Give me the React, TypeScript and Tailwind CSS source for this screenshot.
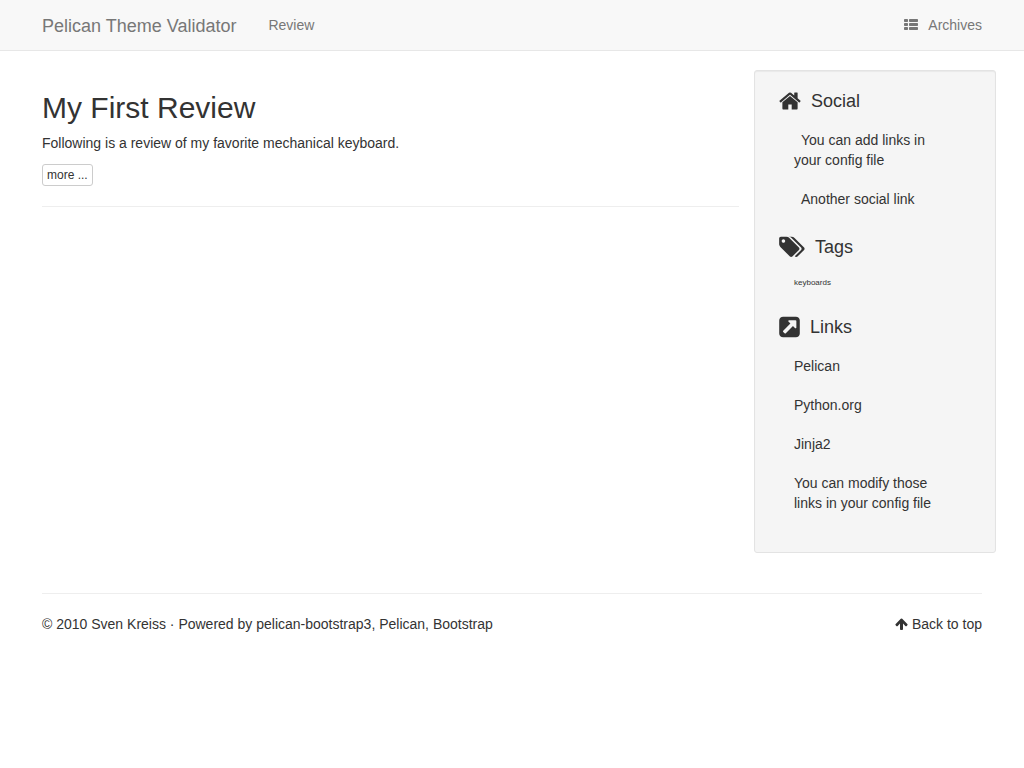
import type { ReactNode } from "react";

type IconProps = { className?: string };

function ListIcon({ className }: IconProps) {
  return (
    <svg viewBox="0 0 1792 1792" className={className} fill="currentColor" aria-hidden="true">
      {[128, 640, 1152].map((y) => (
        <g key={y}>
          <rect x="0" y={y} width="512" height="384" rx="96" />
          <rect x="640" y={y} width="1152" height="384" rx="96" />
        </g>
      ))}
    </svg>
  );
}

function HomeIcon({ className }: IconProps) {
  return (
    <svg viewBox="64 0 1664 1792" className={className} fill="currentColor" aria-hidden="true">
      <path d="M1472 992v480q0 26-19 45t-45 19h-384v-384h-256v384h-384q-26 0-45-19t-19-45v-480q0-1 .5-3t.5-3l575-474 575 474q1 2 1 6zm223-69l-62 74q-8 9-21 11h-3q-13 0-21-7l-692-577-692 577q-12 8-24 7-13-2-21-11l-62-74q-8-10-7-23.5t11-21.5l719-599q32-26 76-26t76 26l244 204v-195q0-14 9-23t23-9h192q14 0 23 9t9 23v408l219 182q10 8 11 21.5t-7 23.5z" />
    </svg>
  );
}

function TagsIcon({ className }: IconProps) {
  return (
    <svg viewBox="0 0 1920 1792" className={className} fill="currentColor" aria-hidden="true">
      <path d="M448 448q0-53-37.500-90.500t-90.500-37.500-90.500 37.500-37.500 90.500 37.500 90.500 90.500 37.500 90.500-37.500 37.500-90.500zm1067 576q0 53-37 90l-491 492q-39 37-91 37-53 0-90-37l-715-716q-38-37-64.500-101t-26.500-117v-416q0-52 38-90t90-38h416q53 0 117 26.500t102 64.500l715 714q37 39 37 91zm384 0q0 53-37 90l-491 492q-39 37-91 37-36 0-59-14t-53-45l470-470q37-37 37-90 0-52-37-91l-715-714q-38-38-102-64.500t-117-26.500h224q53 0 117 26.500t102 64.500l715 714q37 39 37 91z" />
    </svg>
  );
}

function LinkSquareIcon({ className }: IconProps) {
  return (
    <svg viewBox="0 0 1536 1792" className={className} fill="currentColor" aria-hidden="true">
      <path d="M1280 928v-480q0-26-19-45t-45-19h-480q-42 0-59 39-17 41 14 70l144 144-534 534q-19 19-19 45t19 45l102 102q19 19 45 19t45-19l534-534 144 144q18 19 45 19 12 0 25-5 39-17 39-59zm256-512v960q0 119-84.500 203.500t-203.500 84.500h-960q-119 0-203.500-84.500t-84.500-203.500v-960q0-119 84.500-203.500t203.500-84.500h960q119 0 203.500 84.500t84.500 203.500z" />
    </svg>
  );
}

function ArrowUpIcon({ className }: IconProps) {
  return (
    <svg viewBox="64 0 1664 1792" className={className} fill="currentColor" aria-hidden="true">
      <path d="M1675 971q0 51-37 90l-75 75q-38 38-91 38-54 0-90-38l-294-293v704q0 52-37.500 84.500t-90.500 32.500h-128q-53 0-90.500-32.500t-37.500-84.500v-704l-294 293q-36 38-90 38t-90-38l-75-75q-38-38-38-90 0-53 38-91l651-651q35-37 90-37 54 0 91 37l651 651q37 39 37 91z" />
    </svg>
  );
}

function SideSection({ icon, title, children }: { icon: ReactNode; title: string; children: ReactNode }) {
  return (
    <section className="mb-7">
      <h4 className="flex h-5 items-center gap-2.5 text-lg leading-5">
        {icon}
        {title}
      </h4>
      <ul className="mt-[19px] flex flex-col gap-[19px] px-[15px]">{children}</ul>
    </section>
  );
}

const links = ["Pelican", "Python.org", "Jinja2", "You can modify those links in your config file"];

export default function App() {
  return (
    <div className="bg-white font-['Liberation_Sans',Arial,sans-serif] text-sm leading-5 text-[#333333]">
      <nav className="border-b border-[#e7e7e7] bg-[#f8f8f8] text-[#777777]">
        <div className="mx-auto flex h-[50px] max-w-[970px] items-center px-[15px]">
          <a href="#" className="pt-0.5 text-lg leading-5">Pelican Theme Validator</a>
          <a href="#review" className="ml-8">Review</a>
          <a href="#archives" className="ml-auto flex items-center gap-2.5">
            <ListIcon className="h-3.5 w-3.5" />
            Archives
          </a>
        </div>
      </nav>

      <div className="mx-auto mt-[19px] flex max-w-[970px] items-start">
        <main className="min-w-0 flex-1 px-[15px] pt-[21px]">
          <article>
            <h2 className="text-3xl leading-[33px]">
              <a href="#first">My First Review</a>
            </h2>
            <p className="mt-[9px]">Following is a review of my favorite mechanical keyboard.</p>
            <a
              href="#more"
              className="mt-[11px] inline-block rounded-[3px] border border-[#cccccc] bg-white px-1 py-px text-xs leading-[18px]"
            >
              more ...
            </a>
            <hr className="mt-5 border-[#eeeeee]" />
          </article>
        </main>

        <aside className="mr-px w-[242px] shrink-0 rounded-[3px] border border-[#e3e3e3] bg-[#f5f5f5] px-6 pt-5 pb-[11px] shadow-[inset_0_1px_1px_rgba(0,0,0,0.05)]">
          <SideSection icon={<HomeIcon className="h-6 w-[22px]" />} title="Social">
            <li>
              <a href="#social" className="block pr-2">
                <span className="inline-block w-[7px]" />
                You can add links in your config file
              </a>
            </li>
            <li>
              <a href="#another" className="block">
                <span className="inline-block w-[7px]" />
                Another social link
              </a>
            </li>
          </SideSection>
          <SideSection icon={<TagsIcon className="h-6 w-[26px]" />} title="Tags">
            <li>
              <a href="#keyboards" className="block text-[8px] leading-[13px]">keyboards</a>
            </li>
          </SideSection>
          <SideSection icon={<LinkSquareIcon className="h-6 w-[21px]" />} title="Links">
            {links.map((label) => (
              <li key={label}>
                <a href="#links" className="block">{label}</a>
              </li>
            ))}
          </SideSection>
        </aside>
      </div>

      <footer className="mx-auto mt-10 max-w-[970px] px-[15px]">
        <hr className="border-[#eeeeee]" />
        <div className="mt-5 flex justify-between">
          <p>
            © 2010 Sven Kreiss · Powered by <a href="#theme">pelican-bootstrap3</a>, <a href="#pelican">Pelican</a>,{" "}
            <a href="#bootstrap">Bootstrap</a>
          </p>
          <a href="#" className="flex items-center gap-1">
            <ArrowUpIcon className="h-3.5 w-[13px]" />
            Back to top
          </a>
        </div>
      </footer>
    </div>
  );
}
